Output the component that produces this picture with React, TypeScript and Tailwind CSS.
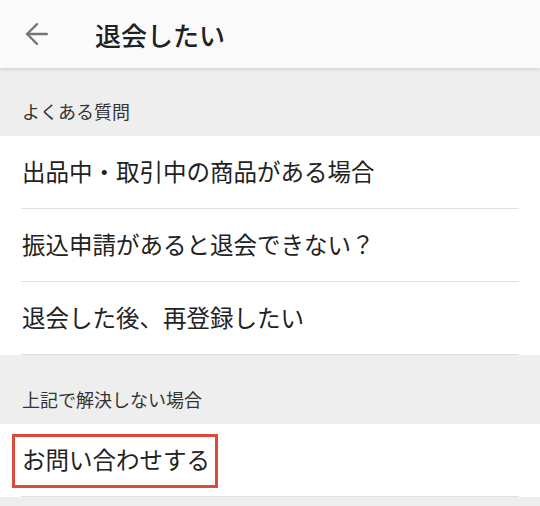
import { ArrowLeft } from "lucide-react";

const faqs = [
  "出品中・取引中の商品がある場合",
  "振込申請があると退会できない？",
  "退会した後、再登録したい",
];

const font = { fontFamily: '"Noto Sans CJK JP", "Noto Sans", sans-serif' };

const Row = ({ label, highlight = false }: { label: string; highlight?: boolean }) => (
  <div className="relative bg-white">
    <div className="flex h-[72px] items-center pl-[22px] text-[23.5px] text-[#222222]">
      {label}
    </div>
    {highlight && (
      <div className="pointer-events-none absolute left-[12px] top-[10px] h-[54px] w-[206px] border-[3px] border-[#dc4b39]" />
    )}
    <div className="mx-[21px] h-px bg-[#e0e0e0]" />
  </div>
);

const SectionLabel = ({ children, tall = false }: { children: string; tall?: boolean }) => (
  <div
    className={`flex items-end bg-[#eeeeee] pb-[11px] pl-[22px] text-[18px] text-[#333333] ${
      tall ? "h-[69px]" : "h-[68px]"
    }`}
  >
    {children}
  </div>
);

export default function App() {
  return (
    <div className="min-h-[506px] w-[540px] bg-[#eeeeee]" style={font}>
      <header className="relative z-10 flex h-[68px] items-center bg-[#fafafa] shadow-[0_1px_4px_rgba(0,0,0,0.15)]">
        <ArrowLeft className="ml-[20px] h-[34px] w-[34px] text-[#757575]" strokeWidth={1.6} />
        <h1 className="ml-[41px] text-[26px] font-medium text-[#212121]">退会したい</h1>
      </header>

      <SectionLabel>よくある質問</SectionLabel>
      {faqs.map((q) => (
        <Row key={q} label={q} />
      ))}

      <SectionLabel tall>上記で解決しない場合</SectionLabel>
      <Row label="お問い合わせする" highlight />
    </div>
  );
}
